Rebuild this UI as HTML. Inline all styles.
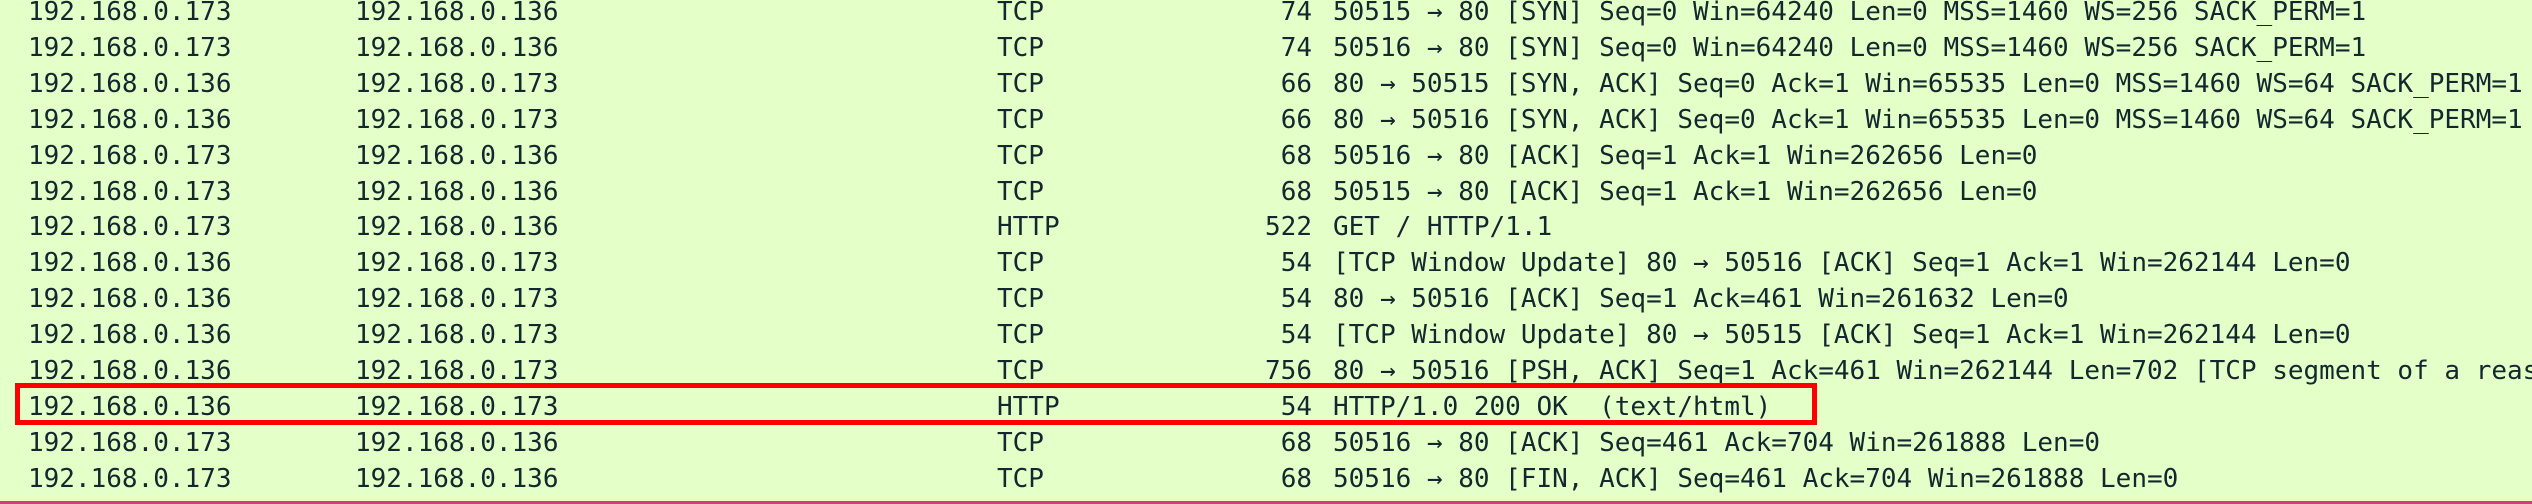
<!DOCTYPE html>
<html><head><meta charset="utf-8"><style>
html,body{margin:0;padding:0;}
body{width:2532px;height:504px;overflow:hidden;background:#e4ffc7;position:relative;}
#w{position:absolute;left:0;top:0;width:2532px;height:504px;overflow:hidden;font-family:"DejaVu Sans Mono","Liberation Mono",monospace;font-size:26px;color:#12272e;}
.r{position:absolute;left:0;width:2532px;height:35.9px;line-height:35.9px;white-space:pre;overflow:hidden;}
.r span{position:absolute;top:0;}
.a{left:28px}.b{left:355px}.c{left:997px}.d{right:1220px;text-align:right}.e{left:1333px}
.box{position:absolute;left:15px;top:383px;width:1802px;height:42px;border:5px solid #f00;box-sizing:border-box;}
.line{position:absolute;left:0;top:501px;width:2532px;height:3px;background:#cf3f7e;}
</style></head><body><div id="w">
<div class="r" style="top:-5px"><span class="a">192.168.0.173</span><span class="b">192.168.0.136</span><span class="c">TCP</span><span class="d">74</span><span class="e">50515 → 80 [SYN] Seq=0 Win=64240 Len=0 MSS=1460 WS=256 SACK_PERM=1</span></div>
<div class="r" style="top:30.9px"><span class="a">192.168.0.173</span><span class="b">192.168.0.136</span><span class="c">TCP</span><span class="d">74</span><span class="e">50516 → 80 [SYN] Seq=0 Win=64240 Len=0 MSS=1460 WS=256 SACK_PERM=1</span></div>
<div class="r" style="top:66.8px"><span class="a">192.168.0.136</span><span class="b">192.168.0.173</span><span class="c">TCP</span><span class="d">66</span><span class="e">80 → 50515 [SYN, ACK] Seq=0 Ack=1 Win=65535 Len=0 MSS=1460 WS=64 SACK_PERM=1</span></div>
<div class="r" style="top:102.7px"><span class="a">192.168.0.136</span><span class="b">192.168.0.173</span><span class="c">TCP</span><span class="d">66</span><span class="e">80 → 50516 [SYN, ACK] Seq=0 Ack=1 Win=65535 Len=0 MSS=1460 WS=64 SACK_PERM=1</span></div>
<div class="r" style="top:138.6px"><span class="a">192.168.0.173</span><span class="b">192.168.0.136</span><span class="c">TCP</span><span class="d">68</span><span class="e">50516 → 80 [ACK] Seq=1 Ack=1 Win=262656 Len=0</span></div>
<div class="r" style="top:174.5px"><span class="a">192.168.0.173</span><span class="b">192.168.0.136</span><span class="c">TCP</span><span class="d">68</span><span class="e">50515 → 80 [ACK] Seq=1 Ack=1 Win=262656 Len=0</span></div>
<div class="r" style="top:210.4px"><span class="a">192.168.0.173</span><span class="b">192.168.0.136</span><span class="c">HTTP</span><span class="d">522</span><span class="e">GET / HTTP/1.1</span></div>
<div class="r" style="top:246.3px"><span class="a">192.168.0.136</span><span class="b">192.168.0.173</span><span class="c">TCP</span><span class="d">54</span><span class="e">[TCP Window Update] 80 → 50516 [ACK] Seq=1 Ack=1 Win=262144 Len=0</span></div>
<div class="r" style="top:282.2px"><span class="a">192.168.0.136</span><span class="b">192.168.0.173</span><span class="c">TCP</span><span class="d">54</span><span class="e">80 → 50516 [ACK] Seq=1 Ack=461 Win=261632 Len=0</span></div>
<div class="r" style="top:318.1px"><span class="a">192.168.0.136</span><span class="b">192.168.0.173</span><span class="c">TCP</span><span class="d">54</span><span class="e">[TCP Window Update] 80 → 50515 [ACK] Seq=1 Ack=1 Win=262144 Len=0</span></div>
<div class="r" style="top:354px"><span class="a">192.168.0.136</span><span class="b">192.168.0.173</span><span class="c">TCP</span><span class="d">756</span><span class="e">80 → 50516 [PSH, ACK] Seq=1 Ack=461 Win=262144 Len=702 [TCP segment of a reas</span></div>
<div class="r" style="top:389.9px"><span class="a">192.168.0.136</span><span class="b">192.168.0.173</span><span class="c">HTTP</span><span class="d">54</span><span class="e">HTTP/1.0 200 OK  (text/html)</span></div>
<div class="r" style="top:425.8px"><span class="a">192.168.0.173</span><span class="b">192.168.0.136</span><span class="c">TCP</span><span class="d">68</span><span class="e">50516 → 80 [ACK] Seq=461 Ack=704 Win=261888 Len=0</span></div>
<div class="r" style="top:461.7px"><span class="a">192.168.0.173</span><span class="b">192.168.0.136</span><span class="c">TCP</span><span class="d">68</span><span class="e">50516 → 80 [FIN, ACK] Seq=461 Ack=704 Win=261888 Len=0</span></div>
<div class="box"></div>
<div class="line"></div>
</div></body></html>
